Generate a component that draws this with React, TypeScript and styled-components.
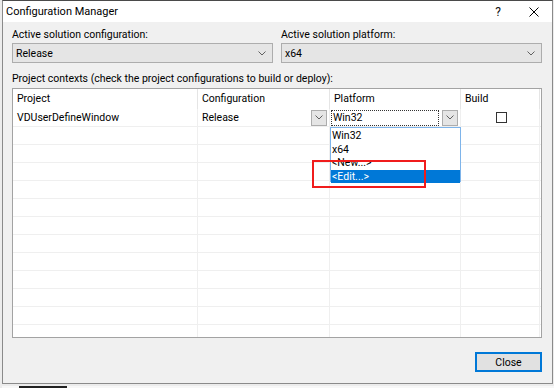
import styled, { createGlobalStyle } from "styled-components";

const GlobalStyle = createGlobalStyle`
  html, body {
    margin: 0;
    padding: 0;
  }
  body {
    width: 554px;
    height: 388px;
    overflow: hidden;
    background: #e9e9e9;
    font-family: Roboto, "Liberation Sans", sans-serif;
    font-size: 10.5px;
    color: #000;
  }
`;

const columns = "185px 132px 131px 79px";
const emptyRows = Array.from({ length: 12 });

const Chevron = () => (
  <svg width="8" height="5" viewBox="0 0 8 5">
    <path d="M0.5 0.5 L4 4 L7.5 0.5" fill="none" stroke="#606060" strokeWidth="1" />
  </svg>
);

const App = () => {
  return (
    <>
      <GlobalStyle />
      <Screen>
        <Window>
          <TitleBar>
            <Title>Configuration Manager</Title>
            <TitleButton>?</TitleButton>
            <TitleButton>
              <svg width="10" height="10" viewBox="0 0 10 10">
                <path d="M0.5 0.5 L9.5 9.5 M9.5 0.5 L0.5 9.5" stroke="#000" strokeWidth="1" />
              </svg>
            </TitleButton>
          </TitleBar>

          <Body>
            <SolutionRow>
              <Field>
                <Label>Active solution configuration:</Label>
                <Combo>
                  <span>Release</span>
                  <Chevron />
                </Combo>
              </Field>
              <Field>
                <Label>Active solution platform:</Label>
                <Combo>
                  <span>x64</span>
                  <Chevron />
                </Combo>
              </Field>
            </SolutionRow>

            <Label>Project contexts (check the project configurations to build or deploy):</Label>

            <Grid>
              <HeaderRow>
                <HeaderCell>Project</HeaderCell>
                <HeaderCell>Configuration</HeaderCell>
                <HeaderCell>Platform</HeaderCell>
                <HeaderCell>Build</HeaderCell>
              </HeaderRow>

              <Row>
                <Cell>VDUserDefineWindow</Cell>
                <Cell>
                  <CellText>Release</CellText>
                  <DropButton>
                    <Chevron />
                  </DropButton>
                </Cell>
                <Cell $edit>
                  <EditBox>Win32</EditBox>
                  <DropButton>
                    <Chevron />
                  </DropButton>
                </Cell>
                <Cell $center>
                  <CheckBox />
                </Cell>
              </Row>

              {emptyRows.map((_, i) => (
                <Row key={i}>
                  <Cell />
                  <Cell />
                  <Cell />
                  <Cell />
                </Row>
              ))}

              <DropList>
                <DropItem>Win32</DropItem>
                <DropItem>x64</DropItem>
                <DropItem>&lt;New...&gt;</DropItem>
                <DropItem $selected>&lt;Edit...&gt;</DropItem>
              </DropList>

              <Highlight />
            </Grid>

            <Footer>
              <Button>Close</Button>
            </Footer>
          </Body>
        </Window>
        <Shelf>
          <ShelfTab />
        </Shelf>
      </Screen>
    </>
  );
};

export default App;

const Screen = styled.div`
  width: 554px;
  height: 388px;
  padding-left: 2px;
  box-sizing: border-box;
  background: #ececec;
`;

const Window = styled.div`
  width: 551px;
  height: 384px;
  box-sizing: border-box;
  border: 1px solid #8a8a8a;
  border-top-color: #4a4a4a;
  background: #f0f0f0;
  display: flex;
  flex-direction: column;
`;

const TitleBar = styled.div`
  height: 21px;
  background: #fff;
  display: flex;
  align-items: center;
  padding-left: 3px;
  font-size: 11px;
`;

const Title = styled.div`
  flex: 1;
`;

const TitleButton = styled.div`
  width: 36px;
  height: 21px;
  display: flex;
  align-items: center;
  justify-content: center;
  font-size: 12px;
  color: #111;
`;

const Body = styled.div`
  flex: 1;
  display: flex;
  flex-direction: column;
  padding: 4px 10px 0 9px;
`;

const SolutionRow = styled.div`
  display: grid;
  grid-template-columns: 1fr 1fr;
  column-gap: 8px;
  margin-bottom: 7px;
`;

const Field = styled.div`
  display: flex;
  flex-direction: column;
`;

const Label = styled.div`
  height: 16px;
  line-height: 16px;
  padding-top: 1px;
  margin-bottom: 0;
  white-space: nowrap;
`;

const Combo = styled.div`
  height: 20px;
  box-sizing: border-box;
  border: 1px solid #adadad;
  background: #e5e5e5;
  display: flex;
  align-items: center;
  justify-content: space-between;
  padding: 0 6px 0 3px;
`;

const Grid = styled.div`
  position: relative;
  height: 250px;
  margin-top: 1px;
  box-sizing: border-box;
  border: 1px solid #a3a3a3;
  background: #fff;
  overflow: hidden;
`;

const HeaderRow = styled.div`
  display: grid;
  grid-template-columns: ${columns};
  height: 20px;
`;

const HeaderCell = styled.div`
  border-right: 1px solid #e5e5e5;
  padding-left: 4px;
  line-height: 20px;
  white-space: nowrap;
`;

const Row = styled.div`
  display: grid;
  grid-template-columns: ${columns};
  height: 18px;
  box-sizing: border-box;
  border-bottom: 1px solid #efefef;
`;

const Cell = styled.div<{ $edit?: boolean; $center?: boolean }>`
  position: relative;
  border-right: 1px solid #efefef;
  display: flex;
  align-items: center;
  justify-content: ${({ $center }) => ($center ? "center" : "flex-start")};
  padding-left: ${({ $edit, $center }) => ($center ? "0" : $edit ? "1px" : "4px")};
  white-space: nowrap;
`;

const CellText = styled.span`
  flex: 1;
`;

const DropButton = styled.div`
  width: 16px;
  height: 16px;
  margin: 0 2px 0 3px;
  box-sizing: border-box;
  border: 1px solid #adadad;
  background: #e5e5e5;
  display: flex;
  align-items: center;
  justify-content: center;
`;

const EditBox = styled.div`
  flex: 1;
  height: 16px;
  box-sizing: border-box;
  border: 1px dotted #333;
  background: #fff;
  line-height: 14px;
  padding-left: 1px;
`;

const CheckBox = styled.div`
  width: 11px;
  height: 11px;
  box-sizing: border-box;
  border: 1px solid #333;
  background: #fff;
  margin-left: 2px;
`;

const DropList = styled.div`
  position: absolute;
  left: 317px;
  top: 38px;
  width: 131px;
  height: 55px;
  box-sizing: border-box;
  border: 1px solid #7eb4ea;
  background: #fff;
  padding-top: 1px;
`;

const DropItem = styled.div<{ $selected?: boolean }>`
  height: 13.5px;
  line-height: 13.5px;
  padding-left: 1px;
  background: ${({ $selected }) => ($selected ? "#0078d7" : "transparent")};
  color: ${({ $selected }) => ($selected ? "#fff" : "#000")};
`;

const Highlight = styled.div`
  position: absolute;
  left: 299px;
  top: 71px;
  width: 114px;
  height: 28px;
  box-sizing: border-box;
  border: 2px solid #f01c1c;
`;

const Footer = styled.div`
  display: flex;
  justify-content: flex-end;
  padding-top: 14px;
`;

const Button = styled.button`
  width: 67px;
  height: 20px;
  box-sizing: border-box;
  border: 1px solid #0078d7;
  box-shadow: inset 0 0 0 1px #0078d7;
  background: #e1e1e1;
  font-family: inherit;
  font-size: 10.5px;
  color: #000;
  padding: 0;
`;

const Shelf = styled.div`
  height: 4px;
  background: #f7f7f7;
  padding-left: 17px;
`;

const ShelfTab = styled.div`
  width: 48px;
  height: 2px;
  margin-top: 2px;
  background: #222;
`;
